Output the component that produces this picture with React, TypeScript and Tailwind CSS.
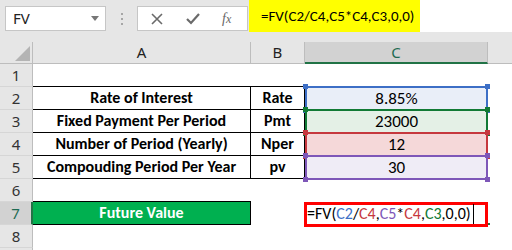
import React from 'react';

const cellFont = { fontFamily: 'Carlito, Calibri, Lato, "Noto Sans", sans-serif' };
const uiFont = { fontFamily: '"Segoe UI", "Noto Sans", "Open Sans", sans-serif' };

type Ref = { border: string; fill: string; square: string };

const refs: Record<string, Ref> = {
  blue: { border: 'border-[#3d6fc6]', fill: 'bg-[#e9eef8]', square: 'bg-[#3d6fc6]' },
  green: { border: 'border-[#117a35]', fill: 'bg-[#e4f0e6]', square: 'bg-[#117a35]' },
  red: { border: 'border-[#c6383e]', fill: 'bg-[#f5d8d9]', square: 'bg-[#c6383e]' },
  purple: { border: 'border-[#7e57b8]', fill: 'bg-[#efecf6]', square: 'bg-[#7e57b8]' },
};

const rows = [
  { n: 2, label: 'Rate of Interest', arg: 'Rate', value: '8.85%', ref: refs.blue },
  { n: 3, label: 'Fixed Payment Per Period', arg: 'Pmt', value: '23000', ref: refs.green },
  { n: 4, label: 'Number of Period (Yearly)', arg: 'Nper', value: '12', ref: refs.red },
  { n: 5, label: 'Compouding Period Per Year', arg: 'pv', value: '30', ref: refs.purple },
];

function RowHeader({ n, active }: { n?: number; active?: boolean }) {
  return (
    <div
      className={`flex items-center justify-center text-[15px] border-b border-[#d6d6d6] ${
        active
          ? 'bg-[#d2d2d2] text-[#1e6b52] border-r-2 border-r-[#217346]'
          : 'bg-[#e6e6e6] text-[#333] border-r border-r-[#bdbdbd]'
      }`}
      style={uiFont}
    >
      {n}
    </div>
  );
}

function RefCell({ value, r }: { value: string; r: Ref }) {
  return (
    <div className={`relative flex items-center justify-center text-[17px] text-black ${r.fill}`} style={cellFont}>
      <div className={`absolute -top-px -bottom-px left-0 right-0 border-2 ${r.border}`} />
      <span className={`absolute -top-[3px] -left-[2px] w-[5px] h-[5px] ${r.square}`} />
      <span className={`absolute -top-[3px] -right-[2px] w-[5px] h-[5px] ${r.square}`} />
      <span className={`absolute -bottom-[3px] -left-[2px] w-[5px] h-[5px] ${r.square}`} />
      <span className={`absolute -bottom-[3px] -right-[2px] w-[5px] h-[5px] ${r.square}`} />
      <span className="relative">{value}</span>
    </div>
  );
}

export default function App() {
  return (
    <div className="w-[512px] h-[250px] overflow-hidden bg-white">
      {/* Formula bar */}
      <div className="h-[42px] bg-[#e6e6e6] flex items-start">
        <div className="ml-[5px] mt-[6px] w-[101px] h-[25px] bg-white border border-[#c6c6c6] flex items-center justify-between pl-[7px] pr-[6px]">
          <span className="text-[15px] text-[#222]" style={uiFont}>FV</span>
          <svg width="8" height="5" viewBox="0 0 8 5"><polygon points="0,0 8,0 4,5" fill="#777" /></svg>
        </div>
        <div className="ml-[15px] mt-[13px] flex flex-col gap-[3px]">
          <span className="w-[2px] h-[2px] bg-[#a6a6a6]" />
          <span className="w-[2px] h-[2px] bg-[#a6a6a6]" />
          <span className="w-[2px] h-[2px] bg-[#a6a6a6]" />
        </div>
        <div className="ml-[14px] mt-[6px] w-[111px] h-[25px] bg-white border border-[#c6c6c6] flex items-center">
          <svg className="ml-[13px]" width="12" height="12" viewBox="0 0 12 12">
            <path d="M1 1 L11 11 M11 1 L1 11" stroke="#6a6a6a" strokeWidth="1.6" />
          </svg>
          <svg className="ml-[23px]" width="14" height="12" viewBox="0 0 14 12">
            <path d="M1 6 L5 10 L13 1" stroke="#6a6a6a" strokeWidth="2.2" fill="none" />
          </svg>
          <span className="ml-[22px] text-[14px] italic text-[#666]" style={{ fontFamily: '"Liberation Serif", serif' }}>
            f<span className="text-[12px]">x</span>
          </span>
        </div>
        <div className="ml-[1px] flex-1 h-[32px] bg-white flex">
          <div className="w-[171px] h-full bg-[#ffff00] flex items-center pl-[12px] text-[15px] text-black whitespace-nowrap" style={cellFont}>
            =FV(C2/C4,C5*C4,C3,0,0)
          </div>
        </div>
      </div>

      {/* Grid */}
      <div className="grid grid-cols-[33px_218px_54px_183px_1fr] grid-rows-[22px_repeat(9,23px)] text-black">
        {/* column headers */}
        <div className="relative bg-[#e6e6e6] border-r border-b border-[#bdbdbd]">
          <svg className="absolute right-[2px] bottom-[2px]" width="15" height="15" viewBox="0 0 15 15">
            <polygon points="15,0 15,15 0,15" fill="#b4b4b4" />
          </svg>
        </div>
        <div className="bg-[#e6e6e6] border-r border-b border-[#bdbdbd] flex items-center justify-center text-[15px] text-[#222]" style={uiFont}>A</div>
        <div className="bg-[#e6e6e6] border-r border-b border-[#bdbdbd] flex items-center justify-center text-[15px] text-[#222]" style={uiFont}>B</div>
        <div className="bg-[#d2d2d2] border-r border-[#bdbdbd] border-b-2 border-b-[#217346] flex items-center justify-center text-[15px] text-[#1e6b52]" style={uiFont}>C</div>
        <div className="bg-[#e6e6e6] border-b border-[#bdbdbd]" />

        {/* row 1 */}
        <RowHeader n={1} />
        <div className="border-b border-black" />
        <div className="border-b border-black" />
        <div />
        <div />

        {rows.map((r) => (
          <React.Fragment key={r.n}>
            <RowHeader n={r.n} />
            <div className="border-r border-b border-black flex items-center justify-center text-[16px] font-bold whitespace-nowrap" style={cellFont}>
              {r.label}
            </div>
            <div className="border-r border-b border-black flex items-center justify-center text-[16px] font-bold" style={cellFont}>
              {r.arg}
            </div>
            <RefCell value={r.value} r={r.ref} />
            <div />
          </React.Fragment>
        ))}

        {/* row 6 */}
        <RowHeader n={6} />
        <div className="border-b border-black" />
        <div />
        <div />
        <div />

        {/* row 7 */}
        <RowHeader n={7} active />
        <div className="bg-[#00b050] border-r border-b border-black flex items-center justify-center text-[16px] font-bold text-white" style={cellFont}>
          Future Value
        </div>
        <div />
        <div className="relative flex items-center pl-[2px] text-[16px] whitespace-nowrap" style={cellFont}>
          <div className="absolute -left-px right-0 top-0 -bottom-[2px] border-[3px] border-[#ff0000]" />
          <span className="relative">
            =FV(<span className="text-[#3d6fc6]">C2</span>/<span className="text-[#c6383e]">C4</span>,
            <span className="text-[#7e57b8]">C5</span>*<span className="text-[#c6383e]">C4</span>,
            <span className="text-[#117a35]">C3</span>,0,0)
          </span>
          <span className="relative ml-[2px] w-px h-[20px] bg-black" />
          <span className="absolute -right-[2px] bottom-0 w-[2px] h-[2px] bg-[#217346]" />
        </div>
        <div />

        {/* row 8, 9 */}
        <RowHeader n={8} />
        <div />
        <div />
        <div />
        <div />
        <RowHeader />
        <div />
        <div />
        <div />
        <div />
      </div>
    </div>
  );
}
